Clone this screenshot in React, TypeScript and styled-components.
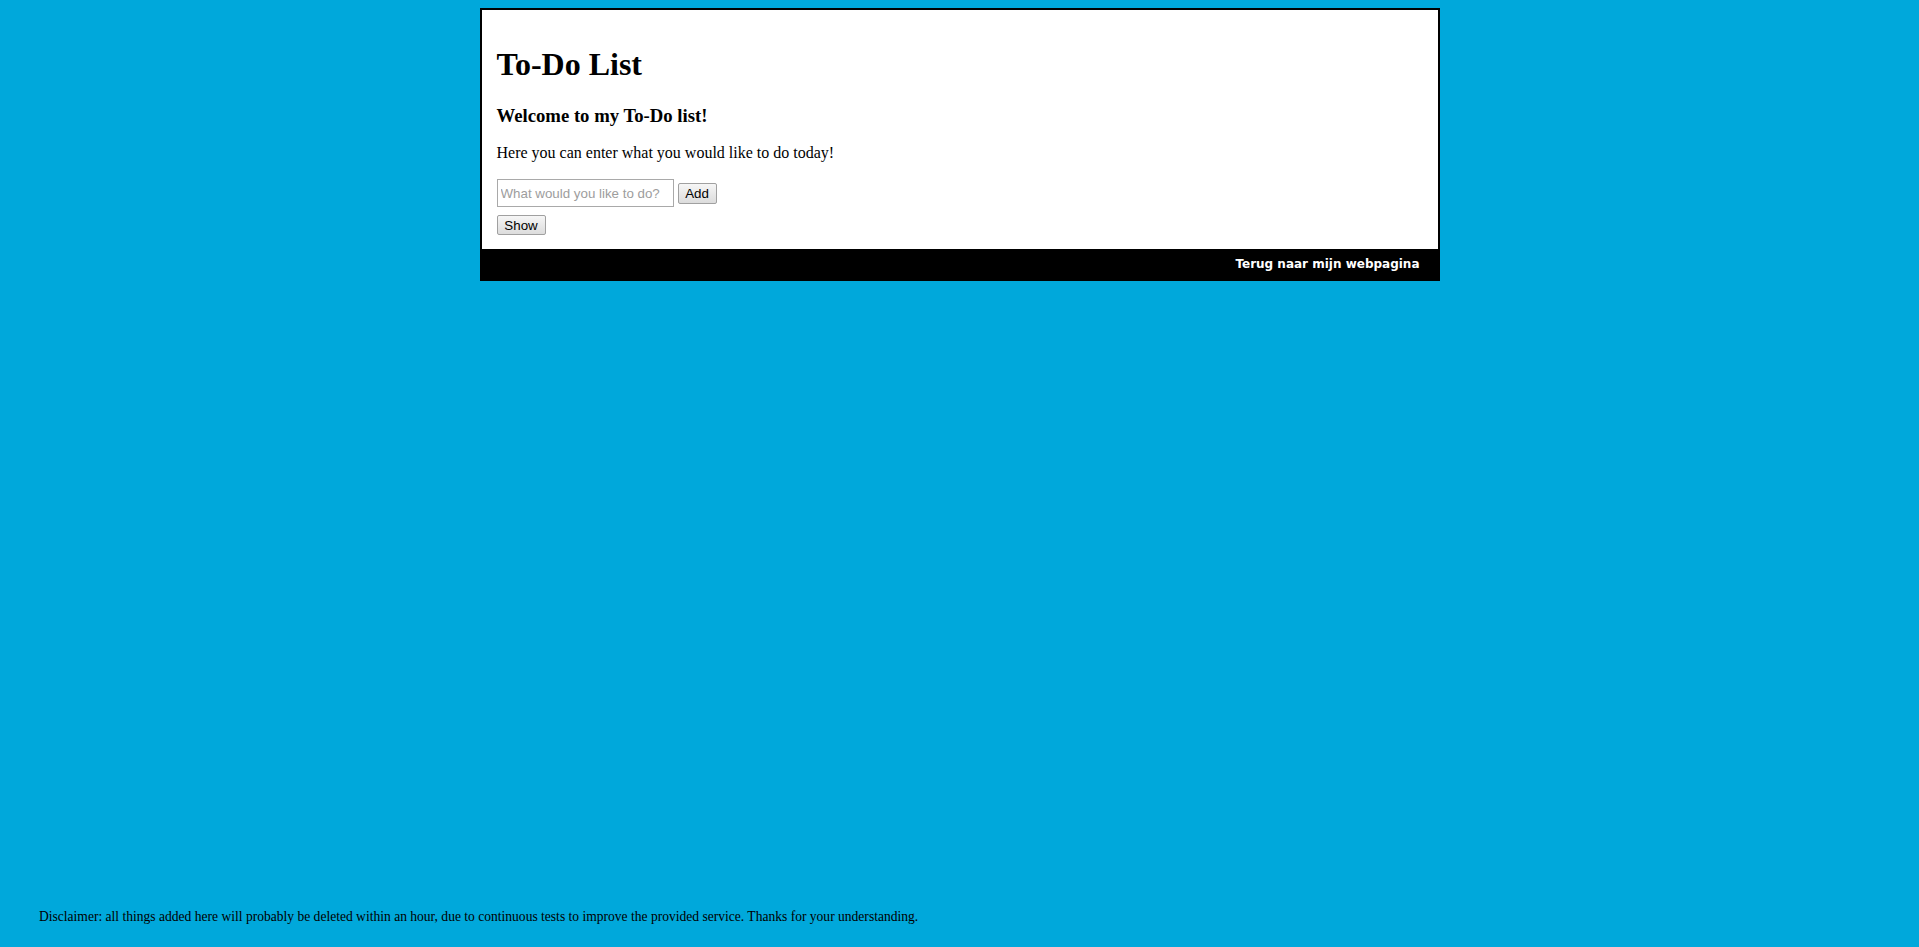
import styled, { createGlobalStyle } from "styled-components";

const GlobalStyle = createGlobalStyle`
  html, body {
    margin: 0;
    padding: 0;
    background: #00a8db;
    font-family: "Liberation Serif", "Times New Roman", serif;
    color: #000;
  }
`;

const Page = styled.div`
  min-height: 100vh;
  box-sizing: border-box;
  padding-top: 8px;
  display: flex;
  flex-direction: column;
`;

const Container = styled.div`
  width: 960px;
  box-sizing: border-box;
  margin: 0 auto;
  border: 2px solid #000;
  background: #fff;
`;

const Content = styled.div`
  padding: 15px 15px 14px 15px;
`;

const Title = styled.h1`
  font-size: 32px;
  font-weight: bold;
  margin: 21.44px 0 22px;
`;

const Subtitle = styled.h3`
  font-size: 18.72px;
  font-weight: bold;
  margin: 18.72px 0 17px;
`;

const Intro = styled.p`
  font-size: 16px;
  margin: 16px 0 17px;
`;

const Row = styled.div`
  display: flex;
  align-items: center;
  gap: 4px;

  & + & {
    margin-top: 8px;
  }
`;

const TaskInput = styled.input`
  width: 177px;
  height: 28px;
  box-sizing: border-box;
  border: 1px solid #a9a9a9;
  padding: 2px 3px;
  font-family: "Liberation Sans", Arial, sans-serif;
  font-size: 13.33px;
  outline: none;

  &::placeholder {
    color: #9d9d9d;
  }
`;

const Button = styled.button<{ $w: number; $h: number }>`
  width: ${(p) => p.$w}px;
  height: ${(p) => p.$h}px;
  box-sizing: border-box;
  padding: 0;
  border: 1px solid #a0a0a0;
  border-radius: 2px;
  background: linear-gradient(#f6f6f6, #dcdcdc);
  font-family: "Liberation Sans", Arial, sans-serif;
  font-size: 13.33px;
  color: #000;
`;

const Footer = styled.div`
  background: #000;
  height: 30px;
  display: flex;
  align-items: center;
  justify-content: flex-end;
  padding-right: 18px;
`;

const BackLink = styled.a`
  color: #fff;
  text-decoration: none;
  font-family: "DejaVu Sans", Verdana, sans-serif;
  font-size: 12px;
  font-weight: bold;
`;

const Disclaimer = styled.p`
  margin: auto 0 22px 39px;
  font-size: 13.55px;
`;

export default function App() {
  return (
    <>
      <GlobalStyle />
      <Page>
        <Container>
          <Content>
            <Title>To-Do List</Title>
            <Subtitle>Welcome to my To-Do list!</Subtitle>
            <Intro>Here you can enter what you would like to do today!</Intro>
            <Row>
              <TaskInput placeholder="What would you like to do?" />
              <Button $w={39} $h={21}>
                Add
              </Button>
            </Row>
            <Row>
              <Button $w={49} $h={20}>
                Show
              </Button>
            </Row>
          </Content>
          <Footer>
            <BackLink href="#">Terug naar mijn webpagina</BackLink>
          </Footer>
        </Container>
        <Disclaimer>
          Disclaimer: all things added here will probably be deleted within an
          hour, due to continuous tests to improve the provided service. Thanks
          for your understanding.
        </Disclaimer>
      </Page>
    </>
  );
}
